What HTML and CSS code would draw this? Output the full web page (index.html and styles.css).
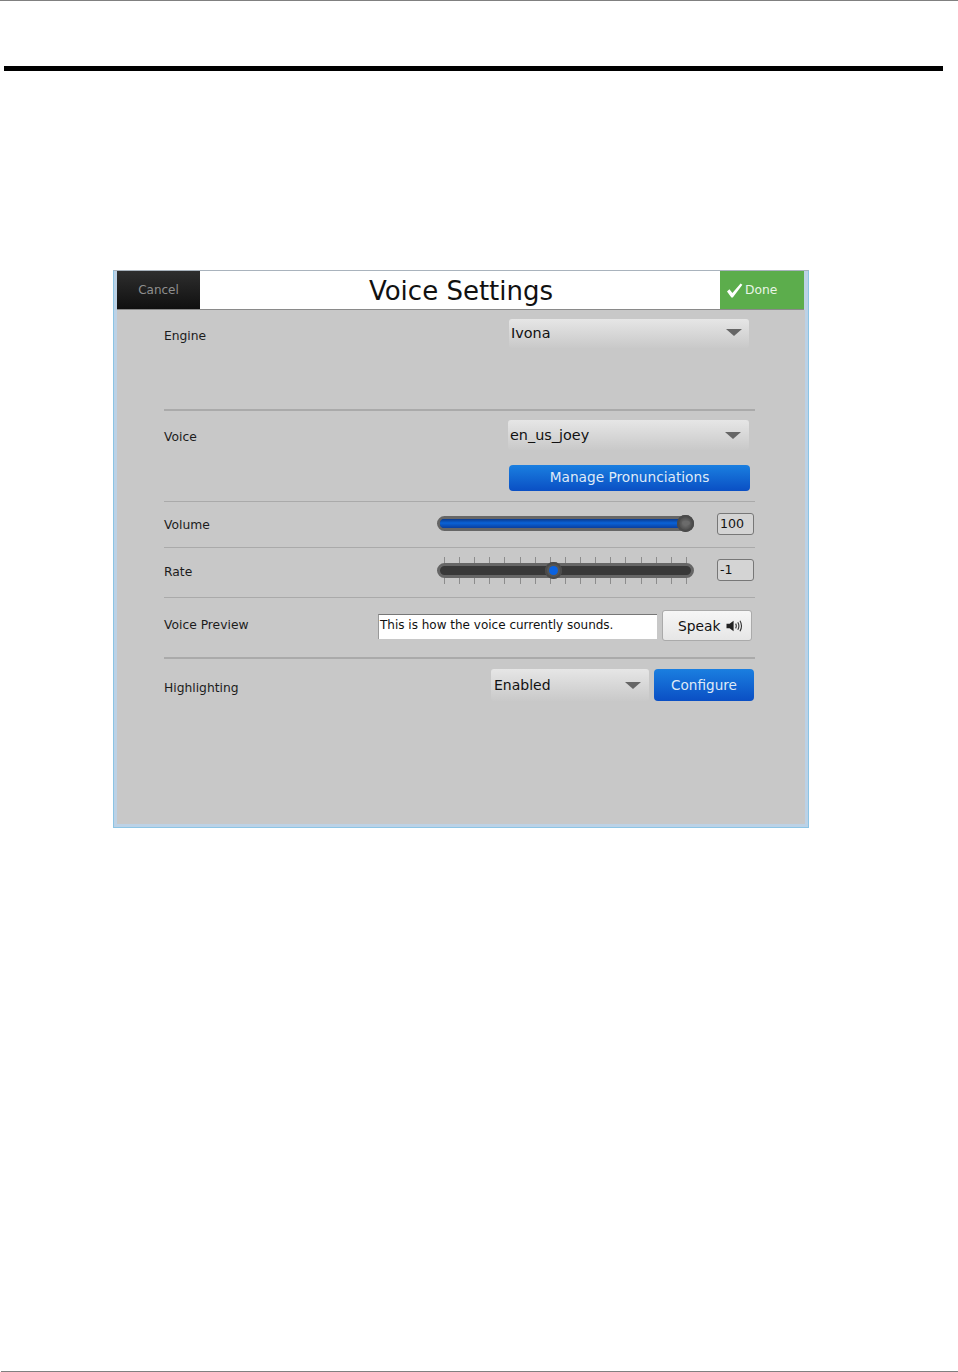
FILE: index.html
```html
<!DOCTYPE html>
<html lang="en">
<head>
    <meta charset="UTF-8">
    <title>Voice Settings</title>
    <link rel="stylesheet" href="styles.css">
</head>
<body>
    <div class="pagina">
        <div class="regua"></div>

        <div class="janela">
            <div class="cabecalho">
                <div class="botaoCancel">Cancel</div>
                <div class="titulo">Voice Settings</div>
                <div class="botaoDone">
                    <svg class="iconeCheck" width="17" height="15" viewBox="0 0 17 15">
                        <path d="M1 8.5 L3.4 6.2 L6.4 10 L14.6 0.6 L16.4 1.8 L6.8 14.6 L5.4 14.6 Z" fill="#fff"/>
                    </svg>
                    <span>Done</span>
                </div>
            </div>

            <div class="conteudo">
                <div class="linha linhaEngine">
                    <div class="rotulo">Engine</div>
                    <div class="select selectEngine">
                        <span>Ivona</span>
                        <i class="seta"></i>
                    </div>
                </div>

                <div class="linha linhaVoice">
                    <div class="rotulo">Voice</div>
                    <div class="colunaVoice">
                        <div class="select selectVoice">
                            <span>en_us_joey</span>
                            <i class="seta"></i>
                        </div>
                        <div class="botaoAzul botaoPronuncia">Manage Pronunciations</div>
                    </div>
                </div>

                <div class="linha linhaVolume">
                    <div class="rotulo">Volume</div>
                    <div class="controle">
                        <div class="slider">
                            <div class="trilha">
                                <div class="preenchido"></div>
                            </div>
                            <div class="pino pinoVolume"><i></i></div>
                        </div>
                        <div class="valor">100</div>
                    </div>
                </div>

                <div class="linha linhaRate">
                    <div class="rotulo">Rate</div>
                    <div class="controle">
                        <div class="slider">
                            <div class="marcas"></div>
                            <div class="trilha"></div>
                            <div class="pino pinoRate"><i></i></div>
                        </div>
                        <div class="valor">-1</div>
                    </div>
                </div>

                <div class="linha linhaPreview">
                    <div class="rotulo">Voice Preview</div>
                    <div class="controlePreview">
                        <div class="caixaTexto">This is how the voice currently sounds.</div>
                        <div class="botaoSpeak">
                            <span>Speak</span>
                            <svg width="17" height="12" viewBox="0 0 17 12">
                                <path d="M0.5 3.8 H3.6 L7.6 0.8 V11.2 L3.6 8.2 H0.5 Z" fill="#222"/>
                                <path d="M9.6 3.6 Q11 6 9.6 8.4 M11.8 2.2 Q14 6 11.8 9.8 M14 0.8 Q17 6 14 11.2" fill="none" stroke="#333" stroke-width="1.1"/>
                            </svg>
                        </div>
                    </div>
                </div>

                <div class="linha linhaHighlight">
                    <div class="rotulo">Highlighting</div>
                    <div class="controleHighlight">
                        <div class="select selectHighlight">
                            <span>Enabled</span>
                            <i class="seta"></i>
                        </div>
                        <div class="botaoAzul botaoConfigure">Configure</div>
                    </div>
                </div>
            </div>
        </div>

        <div class="espaco"></div>
        <div class="rodape"></div>
    </div>
</body>
</html>
```

FILE: styles.css
```css
html, body {
    margin: 0;
    padding: 0;
    background: #fff;
}
body {
    font-family: "DejaVu Sans", Verdana, sans-serif;
    color: #111;
}
.pagina {
    height: 1372px;
    display: flex;
    flex-direction: column;
    border-top: 1px solid #808080;
    box-sizing: border-box;
    overflow: hidden;
}
.regua {
    height: 5px;
    margin: 65px 15px 0 4px;
    background: #000;
}

/* janela do programa */
.janela {
    width: 696px;
    height: 558px;
    margin: 199px 0 0 113px;
    box-sizing: border-box;
    border: 1px solid #8cc4e4;
    border-top-color: #a9b3bd;
    padding: 0 4px 3px 3px;
    background: #bcd2e6;
    display: flex;
    flex-direction: column;
}
.cabecalho {
    height: 38px;
    display: flex;
    background: #fff;
    border-bottom: 1px solid #8a8a8a;
    flex-shrink: 0;
}
.botaoCancel {
    width: 83px;
    background: linear-gradient(#2e2e2e, #101010);
    color: #8f8f8f;
    font-size: 12px;
    display: flex;
    align-items: center;
    justify-content: center;
}
.titulo {
    flex: 1;
    text-align: center;
    font-size: 26px;
    line-height: 41px;
    padding-left: 2px;
    color: #111;
}
.botaoDone {
    width: 84px;
    background: #5cad4c;
    color: #e9f5e6;
    font-size: 12.3px;
    display: flex;
    align-items: center;
    padding-left: 6px;
    box-sizing: border-box;
    gap: 2px;
}
.conteudo {
    flex: 1;
    background: #c8c8c8;
    padding: 0 50px 0 47px;
    margin-right: -1px;
}

/* linhas */
.linha {
    display: flex;
    justify-content: space-between;
    box-sizing: border-box;
    border-bottom: 1px solid #aaa;
}
.rotulo {
    font-size: 12.3px;
    line-height: 16px;
    color: #1c1c1c;
}
.linhaEngine {
    height: 101px;
    padding: 9px 6px 0 0;
    border-bottom-width: 2px;
}
.linhaEngine .rotulo {
    margin-top: 9px;
}
.linhaVoice {
    height: 91px;
    padding: 9px 6px 0 0;
}
.linhaVoice .rotulo {
    margin-top: 9px;
}
.linhaVolume {
    height: 46px;
    align-items: center;
    padding: 0 1px 3px 0;
}
.linhaVolume .rotulo {
    margin-top: 4px;
}
.linhaVolume .valor {
    margin-top: 2px;
}
.linhaRate {
    height: 50px;
    align-items: center;
    padding: 0 1px 4px 0;
}
.linhaRate .rotulo {
    margin-top: 2px;
}
.linhaRate .valor {
    margin-bottom: 2px;
}
.linhaPreview {
    height: 61px;
    align-items: center;
    padding: 0 1px 4px 0;
    border-bottom-width: 2px;
}
.linhaPreview .rotulo {
    margin-bottom: 2px;
}
.linhaHighlight {
    border-bottom: 0;
    padding: 10px 1px 0 0;
}
.linhaHighlight .rotulo {
    margin-top: 11px;
}

/* selects */
.select {
    display: flex;
    align-items: center;
    justify-content: space-between;
    box-sizing: border-box;
    padding: 0 7px 0 2px;
    font-size: 14.4px;
    border-radius: 3px;
    background: linear-gradient(#e6e6e6, #d6d6d6 55%, #c9c9c9);
}
.selectEngine {
    width: 240px;
    height: 29px;
    padding-bottom: 2px;
}
.selectVoice {
    width: 241px;
    height: 30px;
    padding-right: 8px;
}
.selectHighlight {
    width: 158px;
    height: 32px;
    padding: 0 8px 0 3px;
    font-size: 14px;
}
.seta {
    width: 0;
    height: 0;
    border-left: 8px solid transparent;
    border-right: 8px solid transparent;
    border-top: 7px solid #666;
}
.colunaVoice {
    display: flex;
    flex-direction: column;
    align-items: flex-end;
    gap: 15px;
}

/* botoes azuis */
.botaoAzul {
    display: flex;
    align-items: center;
    justify-content: center;
    border-radius: 4px;
    background: linear-gradient(#1a7fe0, #0a4fc4);
    color: #dfeaf7;
}
.botaoPronuncia {
    width: 241px;
    height: 26px;
    margin-right: -1px;
    padding-bottom: 2px;
    box-sizing: border-box;
    font-size: 13.7px;
}
.botaoConfigure {
    width: 100px;
    height: 32px;
    font-size: 13.6px;
}

/* sliders */
.controle {
    display: flex;
    align-items: center;
    gap: 23px;
}
.slider {
    position: relative;
    width: 257px;
    height: 15px;
}
.trilha {
    position: relative;
    height: 15px;
    box-sizing: border-box;
    border: 3px solid #666;
    border-radius: 8px;
    background: #383838;
}
.preenchido {
    height: 100%;
    border-radius: 4px;
    background: linear-gradient(#0a3a8e, #0a62d6 45%, #0a3f9e);
}
.marcas {
    position: absolute;
    left: 7px;
    top: -6px;
    width: 243px;
    height: 27px;
    background: repeating-linear-gradient(90deg, #8c8c8c 0, #8c8c8c 1px, transparent 1px, transparent 15.12px);
}
.pino {
    position: absolute;
    top: -1px;
    width: 17px;
    height: 17px;
    border-radius: 50%;
    background: #555;
    box-shadow: inset 0 0 0 2px #4a4a4a;
    display: flex;
    align-items: center;
    justify-content: center;
}
.pinoVolume {
    left: 240px;
    background: radial-gradient(circle, #777 0, #555 45%, #333 100%);
}
.pinoVolume i {
    width: 8px;
    height: 4px;
    border-radius: 2px;
    background: #6b6b6b;
}
.pinoRate {
    left: 108px;
}
.pinoRate i {
    width: 9px;
    height: 9px;
    border-radius: 50%;
    background: #0a62e0;
}
.valor {
    width: 37px;
    height: 22px;
    box-sizing: border-box;
    border: 1px solid #777;
    border-radius: 3px;
    background: #d4d4d4;
    font-size: 12.6px;
    line-height: 19px;
    padding-left: 2px;
}

/* preview */
.controlePreview {
    display: flex;
    align-items: center;
    gap: 5px;
    margin-right: 2px;
}
.caixaTexto {
    width: 279px;
    height: 25px;
    margin-top: 2px;
    box-sizing: border-box;
    background: #fff;
    border-top: 1px solid #777;
    border-left: 1px solid #999;
    font-size: 12px;
    line-height: 20px;
    padding-left: 1px;
    white-space: nowrap;
}
.botaoSpeak {
    width: 90px;
    height: 31px;
    box-sizing: border-box;
    border: 1px solid #aaa;
    border-radius: 3px;
    background: linear-gradient(#f6f6f6, #e6e6e6);
    display: flex;
    align-items: center;
    justify-content: space-between;
    padding: 0 8px 0 15px;
    font-size: 13.8px;
}
.controleHighlight {
    display: flex;
    gap: 5px;
}
.espaco {
    flex: 1;
}
.rodape {
    height: 1px;
    margin-left: 1px;
    background: #808080;
}
```
